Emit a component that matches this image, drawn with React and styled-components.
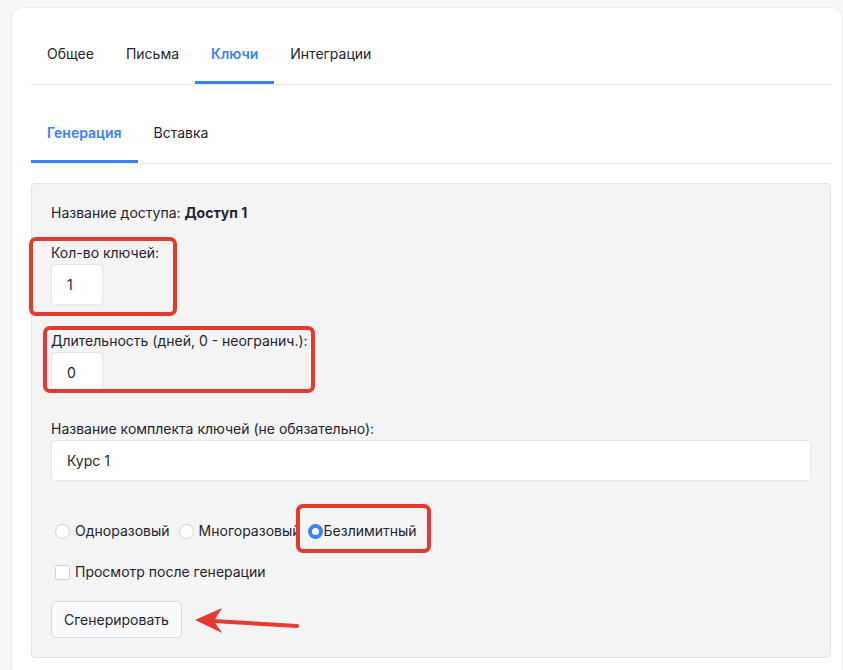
import React, { useState } from "react";
import styled, { createGlobalStyle } from "styled-components";

const Global = createGlobalStyle`
  html, body { margin: 0; padding: 0; }
  body {
    background: #f7f7f8;
    font-family: Inter, "Noto Sans", "Liberation Sans", sans-serif;
    color: #1f2430;
    font-size: 14px;
    overflow: hidden;
  }
  * { box-sizing: border-box; }
`;

const Page = styled.div`
  padding: 7px 0 0 11px;
`;

const Card = styled.div`
  background: #fff;
  border: 1px solid #ececf3;
  border-radius: 12px;
  padding: 21px 11px 20px 19px;
`;

const TabList = styled.div`
  display: flex;
  border-bottom: 1px solid #ececf3;
  margin-top: ${(p) => p.$mt || 0}px;
`;

const Tab = styled.div`
  padding: 15px 16px 17px;
  line-height: 20px;
  font-size: 14px;
  font-weight: ${(p) => (p.$active ? 600 : 400)};
  color: ${(p) => (p.$active ? "#3b82f6" : "#1f2430")};
  border-bottom: 3px solid ${(p) => (p.$active ? "#3b82f6" : "transparent")};
  cursor: pointer;
`;

const Panel = styled.div`
  position: relative;
  margin-top: 19px;
  background: #f4f4f5;
  border: 1px solid #e4e4e8;
  border-radius: 4px;
  padding: 19px 19px 19px 19px;
`;

const Info = styled.div`
  line-height: 20px;
  strong { font-weight: 700; }
`;

const Field = styled.div`
  margin-top: ${(p) => p.$mt}px;
`;

const Label = styled.label`
  display: block;
  line-height: 20px;
  margin-bottom: 1px;
`;

const Input = styled.input`
  display: block;
  width: ${(p) => (p.$full ? "760px" : "52px")};
  height: 41px;
  padding: 0 15px;
  border: 1px solid #e6e6ec;
  border-radius: 4px;
  background: #fff;
  font: inherit;
  font-size: 14px;
  color: #1f2430;
  outline: none;
`;

const RadioRow = styled.div`
  display: flex;
  align-items: center;
  gap: 5px;
  margin-top: 40px;
  line-height: 20px;
`;

const Choice = styled.label`
  display: flex;
  align-items: center;
  cursor: pointer;
`;

const Radio = styled.span`
  width: 15px;
  height: 15px;
  border-radius: 50%;
  background: #fff;
  margin: 0 ${(p) => (p.$checked ? 1 : 5)}px 0 ${(p) => (p.$checked ? 2 : 4)}px;
  border: ${(p) => (p.$checked ? "4px solid #3b82f6" : "1px solid #cfd2d8")};
  flex: none;
`;

const CheckRow = styled.label`
  display: flex;
  align-items: center;
  margin-top: 21px;
  line-height: 20px;
`;

const Box = styled.span`
  width: 15px;
  height: 15px;
  border-radius: 3px;
  background: #fff;
  border: 1px solid #cfd2d8;
  margin: 0 5px 0 4px;
  flex: none;
`;

const Button = styled.button`
  display: block;
  margin-top: 19px;
  height: 37px;
  padding: 0 12px;
  background: #f9fafb;
  border: 1px solid #d9dae0;
  border-radius: 5px;
  font: inherit;
  font-size: 14px;
  color: #1f2430;
  cursor: pointer;
`;

const Mark = styled.div`
  position: absolute;
  left: ${(p) => p.$x}px;
  top: ${(p) => p.$y}px;
  width: ${(p) => p.$w}px;
  height: ${(p) => p.$h}px;
  border: 4px solid #e43a30;
  border-radius: 7px;
  pointer-events: none;
`;

const Arrow = styled.svg`
  position: absolute;
  left: 155px;
  top: 416px;
  pointer-events: none;
`;

export default function App() {
  const [kind, setKind] = useState("unlim");
  const kinds = [
    ["once", "Одноразовый"],
    ["multi", "Многоразовый"],
    ["unlim", "Безлимитный"],
  ];
  return (
    <Page>
      <Global />
      <Card>
        <TabList>
          <Tab>Общее</Tab>
          <Tab>Письма</Tab>
          <Tab $active>Ключи</Tab>
          <Tab>Интеграции</Tab>
        </TabList>
        <TabList $mt={23}>
          <Tab $active>Генерация</Tab>
          <Tab>Вставка</Tab>
        </TabList>
        <Panel>
          <Info>
            Название доступа: <strong>Доступ 1</strong>
          </Info>
          <Field $mt={20}>
            <Label>Кол-во ключей:</Label>
            <Input defaultValue="1" />
          </Field>
          <Field $mt={26}>
            <Label>Длительность (дней, 0 - неогранич.):</Label>
            <Input defaultValue="0" />
          </Field>
          <Field $mt={26}>
            <Label>Название комплекта ключей (не обязательно):</Label>
            <Input $full defaultValue="Курс 1" />
          </Field>
          <RadioRow>
            {kinds.map(([k, t]) => (
              <Choice key={k} onClick={() => setKind(k)}>
                <Radio $checked={kind === k} />
                {t}
              </Choice>
            ))}
          </RadioRow>
          <CheckRow>
            <Box />
            Просмотр после генерации
          </CheckRow>
          <Button>Сгенерировать</Button>

          <Mark $x={-3} $y={53} $w={148} $h={79} />
          <Mark $x={11} $y={142} $w={272} $h={67} />
          <Mark $x={264} $y={320} $w={135} $h={49} />
          <Arrow width="120" height="40" viewBox="0 0 120 40">
            <line x1="26" y1="21" x2="110" y2="26" stroke="#e43a30" strokeWidth="4" strokeLinecap="round" />
            <polygon points="8,20 35,8 27,21 35,33" fill="#e43a30" />
          </Arrow>
        </Panel>
      </Card>
    </Page>
  );
}
